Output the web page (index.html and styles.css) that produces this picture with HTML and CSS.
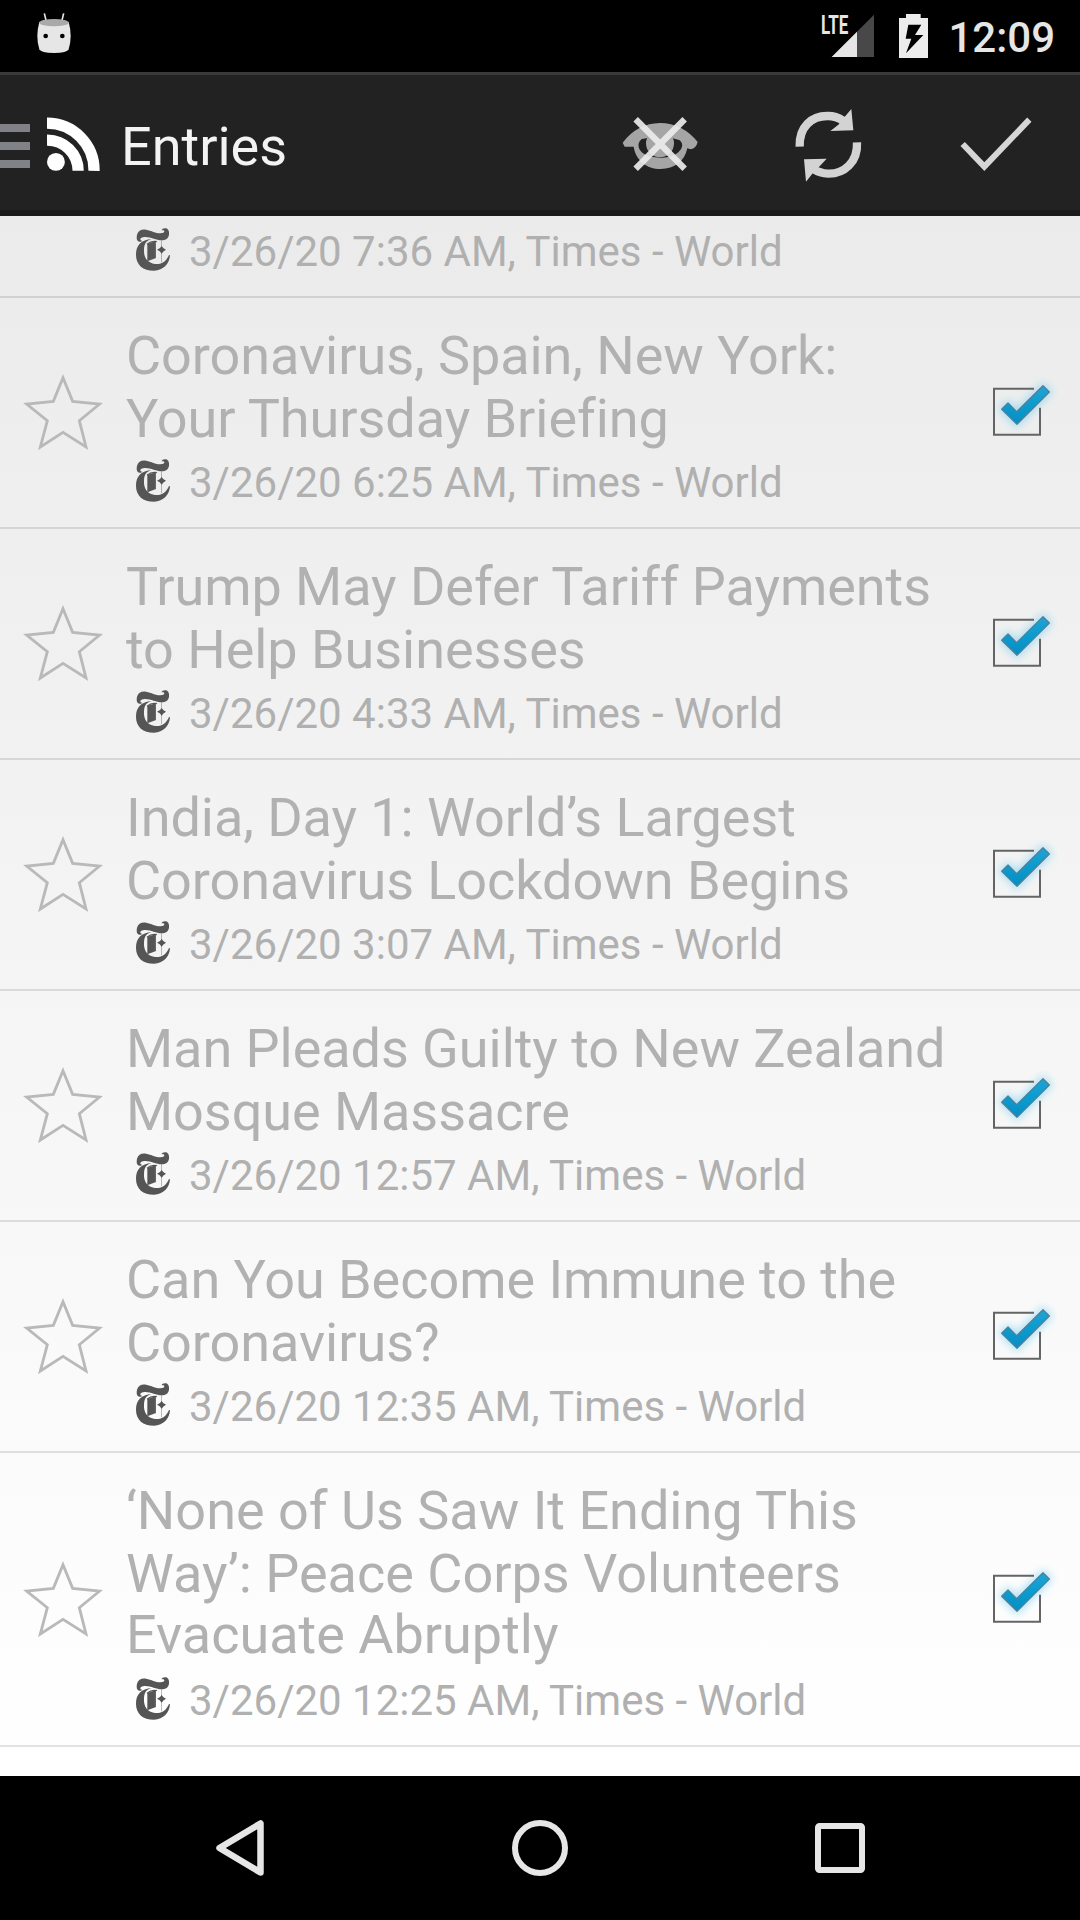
FILE: index.html
```html
<!DOCTYPE html>
<html lang="en">
<head>
<meta charset="utf-8">
<title>Entries</title>
<link rel="stylesheet" href="styles.css">
</head>
<body>
<svg class="defs" aria-hidden="true">
  <defs>
    <linearGradient id="tick-fill" x1="0" y1="0" x2="0" y2="1">
      <stop offset="0" stop-color="#1fa3d6"/><stop offset=".5" stop-color="#0b9bcf"/><stop offset="1" stop-color="#068dc4"/>
    </linearGradient>
    <filter id="glow" x="-40%" y="-40%" width="180%" height="180%"><feGaussianBlur stdDeviation="12"/></filter>
    <symbol id="star" viewBox="69 472 240 240">
      <path d="M189 489L218 560L299 568L238 618L258 697L189 653L121 697L142 618L80 568L160 560Z" fill="none" stroke="#b9b9b9" stroke-width="8.500"/>
    </symbol>
    <symbol id="checkbox" viewBox="120 97 240 240">
      <path d="M184 209L204 188L230 214L309 136L330 157L231 256Z" fill="#7fd0f2" stroke="#7fd0f2" stroke-width="12" opacity=".65" filter="url(#glow)"/>
      <path d="M282 147H162V285H300V204" fill="none" stroke="#646464" stroke-width="6"/>
      <path d="M185 209L204 190L230 216L309 138L328 157L231 254Z" fill="url(#tick-fill)" stroke="#4d8199" stroke-width="4" stroke-linejoin="round"/>
    </symbol>
    <symbol id="times" viewBox="0 0 102 129">
      <g fill="#555">
        <path d="M11 41C2 40 1 31 3 20C6 8 17 3 30 5C47 8 58 16 73 16C81 16 85 14 85 10C85 6 81 6 77 7C77 2 84 0 90 1C98 3 100 12 99 20C97 31 89 37 77 37C61 37 43 26 26 27C18 28 13 30 13 34C13 37 15 38 18 38C17 41 14 42 11 41Z"/>
        <path d="M47 33C28 38 25 50 24 65C23 87 31 103 57 108C77 110 91 100 99 81L102 82C100 108 83 127 54 128C21 128 0 111 0 80C0 51 16 36 47 33Z"/>
        <path d="M34 48L60 39V90L34 100Z"/>
        <path d="M63 65Q72 63 77 54Q81 62 90 65Q81 69 77 77Q72 68 63 65Z"/>
        <path d="M75 37H77V103H75Z" opacity=".6"/>
        <path d="M32 47Q45 35 64 39L61 43Q46 40 34 50Z"/>
      </g>
      <path d="M58 42V91" stroke="#999" stroke-width="1"/>
    </symbol>
  </defs>
</svg>

<div class="screen">
  <header class="status">
    <svg class="robot" viewBox="105 30 114 135">
      <path d="M133 40L139 65M191 40L185 65" stroke="#e6e6e6" stroke-width="5"/>
      <path d="M118 66Q106 108 118 148Q122 159 162 159Q202 159 206 148Q218 108 206 66Z" fill="#e6e6e6"/>
      <ellipse cx="162" cy="68" rx="44" ry="11" fill="#a9a9a9"/>
      <circle cx="137" cy="108" r="7"/><circle cx="187" cy="108" r="7"/>
    </svg>
    <svg class="indicators" viewBox="660 30 330 150">
      <text x="663" y="101" class="lte" textLength="82" lengthAdjust="spacingAndGlyphs">LTE</text>
      <path d="M695 171L822 44V171Z" fill="#484848"/>
      <path d="M695 171L771 95V171Z" fill="#e6e6e6"/>
      <path d="M918 42H962V54H984V174H897V54H918ZM925 74L917 116H934L918 160L970 105H945L964 74Z" fill="#ececec" fill-rule="evenodd"/>
    </svg>
    <span class="clock">12:09</span>
  </header>

  <nav class="actionbar">
    <svg class="drawer" viewBox="0 0 30 44"><path d="M0 4H30M0 22H30M0 40H30" stroke="#818287" stroke-width="8"/></svg>
    <svg class="feed" viewBox="141 351 160 162">
      <circle cx="168" cy="486" r="27" fill="#fff"/>
      <path d="M141 420A93 93 0 0 1 235 513M141 369A142 142 0 0 1 283 513" fill="none" stroke="#fff" stroke-width="34"/>
    </svg>
    <h1 class="heading">Entries</h1>
    <div class="actions">
      <svg class="action" viewBox="36 288 288 288">
        <path d="M68 428Q112 370 180 369Q248 370 293 426Q288 446 272 448L262 445C254 484 224 507 182 507C139 507 108 481 101 440H74ZM125 417C107 432 117 454 134 463C151 475 207 478 229 461C244 452 255 433 238 420C217 415 218 409 180 410C143 409 145 415 125 417Z" fill="#a5a5a5" fill-rule="evenodd"/>
        <circle cx="180" cy="430" r="42" fill="#a5a5a5"/>
        <path d="M107 358L254 506M254 358L107 506" stroke="#ebebeb" stroke-opacity=".92" stroke-width="19"/>
      </svg>
      <svg class="action" viewBox="540 288 288 288">
        <path d="M599 440C597 380 635 347 684 348Q708 348 730 362M771 427C774 487 732 522 684 521Q660 520 640 507" fill="none" stroke="#d3d3d3" stroke-width="25"/>
        <path d="M754 327L760 391L691 393L715 374L733 352ZM612 478L680 476L659 499L637 521L618 545Z" fill="#d3d3d3"/>
      </svg>
      <svg class="action" viewBox="1044 288 288 288"><path d="M1088 432L1153 500L1288 359" fill="none" stroke="#d6d6d6" stroke-width="18"/></svg>
    </div>
  </nav>

  <main class="list">
    <article class="row row-cut">
      <div class="entry">
        <div class="meta"><svg class="logo"><use href="#times"/></svg><span>3/26/20 7:36 AM, Times - World</span></div>
      </div>
    </article>
    <article class="row">
      <svg class="star"><use href="#star"/></svg>
      <div class="entry">
        <h2 class="title"><span>Coronavirus, Spain, New York:</span><span>Your Thursday Briefing</span></h2>
        <div class="meta"><svg class="logo"><use href="#times"/></svg><span>3/26/20 6:25 AM, Times - World</span></div>
      </div>
      <svg class="check"><use href="#checkbox"/></svg>
    </article>
    <article class="row">
      <svg class="star"><use href="#star"/></svg>
      <div class="entry">
        <h2 class="title"><span>Trump May Defer Tariff Payments</span><span>to Help Businesses</span></h2>
        <div class="meta"><svg class="logo"><use href="#times"/></svg><span>3/26/20 4:33 AM, Times - World</span></div>
      </div>
      <svg class="check"><use href="#checkbox"/></svg>
    </article>
    <article class="row">
      <svg class="star"><use href="#star"/></svg>
      <div class="entry">
        <h2 class="title"><span>India, Day 1: World’s Largest</span><span>Coronavirus Lockdown Begins</span></h2>
        <div class="meta"><svg class="logo"><use href="#times"/></svg><span>3/26/20 3:07 AM, Times - World</span></div>
      </div>
      <svg class="check"><use href="#checkbox"/></svg>
    </article>
    <article class="row">
      <svg class="star"><use href="#star"/></svg>
      <div class="entry">
        <h2 class="title"><span>Man Pleads Guilty to New Zealand</span><span>Mosque Massacre</span></h2>
        <div class="meta"><svg class="logo"><use href="#times"/></svg><span>3/26/20 12:57 AM, Times - World</span></div>
      </div>
      <svg class="check"><use href="#checkbox"/></svg>
    </article>
    <article class="row">
      <svg class="star"><use href="#star"/></svg>
      <div class="entry">
        <h2 class="title"><span>Can You Become Immune to the</span><span>Coronavirus?</span></h2>
        <div class="meta"><svg class="logo"><use href="#times"/></svg><span>3/26/20 12:35 AM, Times - World</span></div>
      </div>
      <svg class="check"><use href="#checkbox"/></svg>
    </article>
    <article class="row">
      <svg class="star"><use href="#star"/></svg>
      <div class="entry">
        <h2 class="title title-long"><span>‘None of Us Saw It Ending This</span><span>Way’: Peace Corps Volunteers</span><span>Evacuate Abruptly</span></h2>
        <div class="meta"><svg class="logo"><use href="#times"/></svg><span>3/26/20 12:25 AM, Times - World</span></div>
      </div>
      <svg class="check"><use href="#checkbox"/></svg>
    </article>
  </main>

  <footer class="navbar">
    <svg viewBox="0 0 60 80"><path d="M50.500 15.500V64.500L9.500 40Z" fill="none" stroke="#e6e6e6" stroke-width="6.500" stroke-linejoin="round"/></svg>
    <svg viewBox="0 0 60 80"><circle cx="30" cy="40" r="25" fill="none" stroke="#e6e6e6" stroke-width="6"/></svg>
    <svg viewBox="0 0 60 80"><rect x="8" y="18" width="44" height="44" rx="1.500" fill="none" stroke="#e6e6e6" stroke-width="6"/></svg>
  </footer>
</div>
</body>
</html>
```
FILE: styles.css
```css
* { box-sizing: border-box; margin: 0; padding: 0; }

body {
  background: #000;
  font-family: Roboto, "Liberation Sans", sans-serif;
}

svg { display: block; flex: none; }

.defs { position: absolute; width: 0; height: 0; }

.screen {
  display: flex;
  flex-direction: column;
  width: 1080px;
  height: 1920px;
  overflow: hidden;
}

.status {
  display: flex;
  align-items: flex-start;
  height: 72px;
  padding: 10px 25px 0 35px;
  background: #000;
}

.robot { width: 38px; height: 45px; }

.indicators {
  width: 110px;
  height: 50px;
  margin-left: auto;
}

.lte {
  fill: #e6e6e6;
  font-size: 78px;
  font-weight: 700;
}

.clock {
  margin: 3px 0 0 18px;
  color: #e6e6e6;
  font-size: 42px;
  font-weight: 500;
  line-height: 49px;
}

.actionbar {
  display: flex;
  align-items: center;
  height: 144px;
  background: #222;
  box-shadow: inset 0 3px #3a3a3a, inset 0 -6px #1a1a1a;
}

.drawer { width: 30px; height: 44px; margin-top: 4px; }

.feed { width: 53px; height: 54px; margin-left: 17px; }

.heading {
  margin: 5px 0 0 21px;
  color: #f3f3f3;
  font-size: 54px;
  font-weight: 400;
  line-height: 63px;
}

.actions { display: flex; margin-left: auto; }

.action { width: 96px; height: 96px; margin: 0 36px; }

.list {
  flex: 1;
  background: linear-gradient(#ebebeb, #fff);
}

.row {
  display: flex;
  align-items: center;
  padding: 26px 20px 20px 23px;
  border-bottom: 2px solid rgba(0, 0, 0, .11);
}

.row-cut { padding: 11px 20px 20px 103px; }

.star, .check { width: 80px; height: 80px; margin-top: -7px; }

.entry { flex: 1; padding-left: 23px; }

.title {
  color: #b1b1b1;
  font-size: 54px;
  font-weight: 400;
  letter-spacing: -.05px;
  line-height: 63px;
  white-space: nowrap;
}

.title span { display: block; }

.title-long { letter-spacing: 0; }

.title-long span:last-child { margin: -2px 0 2px; }

.meta {
  display: flex;
  align-items: flex-start;
  padding-left: 10px;
  color: #b0b0b0;
  font-size: 42px;
  line-height: 49px;
}

.title + .meta { padding-top: 8px; }

.logo { width: 34px; height: 43px; margin: 1px 19px 0 0; }

.navbar {
  display: flex;
  justify-content: center;
  gap: 240px;
  height: 144px;
  padding-top: 32px;
  background: #000;
}

.navbar svg { width: 60px; height: 80px; }
```
